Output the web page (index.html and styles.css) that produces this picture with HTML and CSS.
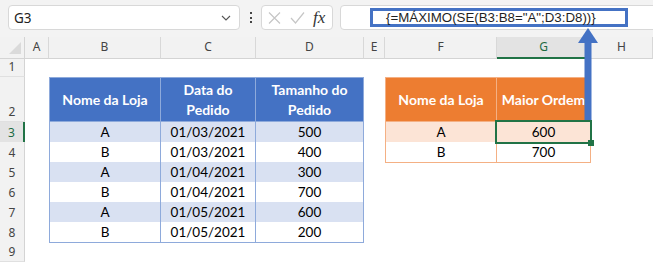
FILE: index.html
```html
<!DOCTYPE html>
<html lang="pt">
<head>
  <meta charset="UTF-8" />
  <title>MÁXIMO SE</title>
  <link rel="stylesheet" href="styles.css">
</head>
<body>
  <div class="toolbar">
    <div class="namebox">
      <span>G3</span>
      <svg width="10" height="6" viewBox="0 0 10 6"><path d="M1 1 L5 5 L9 1" fill="none" stroke="#555" stroke-width="1.1"/></svg>
    </div>
    <div class="dots"><i></i><i></i><i></i></div>
    <div class="fxbox">
      <svg width="13" height="12" viewBox="0 0 13 12"><path d="M1 0.5 L12 11.5 M12 0.5 L1 11.5" stroke="#c6c6c6" stroke-width="1.2"/></svg>
      <svg width="15" height="12" viewBox="0 0 15 12"><path d="M1 6 L5.5 11 L14 0.5" fill="none" stroke="#c6c6c6" stroke-width="1.2"/></svg>
      <span class="fx">fx</span>
    </div>
    <div class="formula">
      <span class="hl">{=MÁXIMO(SE(B3:B8="A";D3:D8))}</span>
    </div>
  </div>

  <div class="sheet">
    <div class="row">
      <div class="corner"></div>
      <div class="ch">A</div><div class="ch">B</div><div class="ch">C</div><div class="ch">D</div>
      <div class="ch">E</div><div class="ch">F</div><div class="ch active">G</div><div class="ch">H</div>
    </div>
    <div class="row">
      <div class="rh">1</div>
      <div></div><div></div><div></div><div></div><div></div><div></div><div></div><div></div>
    </div>
    <div class="row tall">
      <div class="rh">2</div>
      <div></div>
      <div class="b bh first top">Nome da Loja</div>
      <div class="b bh top">Data do<br>Pedido</div>
      <div class="b bh top">Tamanho do<br>Pedido</div>
      <div></div>
      <div class="o oh first top">Nome da Loja</div>
      <div class="o oh top">Maior Ordem</div>
      <div></div>
    </div>
    <div class="row">
      <div class="rh active">3</div>
      <div></div>
      <div class="b band first">A</div><div class="b band">01/03/2021</div><div class="b band">500</div>
      <div></div>
      <div class="o oband first">A</div><div class="o oband sel">600</div>
      <div></div>
    </div>
    <div class="row">
      <div class="rh">4</div>
      <div></div>
      <div class="b first">B</div><div class="b">01/03/2021</div><div class="b">400</div>
      <div></div>
      <div class="o first">B</div><div class="o">700</div>
      <div></div>
    </div>
    <div class="row">
      <div class="rh">5</div>
      <div></div>
      <div class="b band first">A</div><div class="b band">01/04/2021</div><div class="b band">300</div>
      <div></div><div></div><div></div><div></div>
    </div>
    <div class="row">
      <div class="rh">6</div>
      <div></div>
      <div class="b first">B</div><div class="b">01/04/2021</div><div class="b">700</div>
      <div></div><div></div><div></div><div></div>
    </div>
    <div class="row">
      <div class="rh">7</div>
      <div></div>
      <div class="b band first">A</div><div class="b band">01/05/2021</div><div class="b band">600</div>
      <div></div><div></div><div></div><div></div>
    </div>
    <div class="row">
      <div class="rh">8</div>
      <div></div>
      <div class="b first">B</div><div class="b">01/05/2021</div><div class="b">200</div>
      <div></div><div></div><div></div><div></div>
    </div>
    <div class="row">
      <div class="rh">9</div>
      <div></div><div></div><div></div><div></div><div></div><div></div><div></div><div></div>
    </div>
  </div>

  <svg class="arrow" width="22" height="102" viewBox="0 0 22 102">
    <path d="M11 0 L21 15 L1 15 Z" fill="#4472c4"/>
    <rect x="7.5" y="12" width="7" height="88" rx="3" fill="#4472c4"/>
  </svg>
</body>
</html>
```
FILE: styles.css
```css
body {
  margin: 0;
  width: 653px;
  height: 263px;
  overflow: hidden;
  background: #fff;
  font-family: "Noto Sans", sans-serif;
  position: relative;
}
.toolbar {
  height: 37px;
  background: #f3f3f3;
  display: flex;
  align-items: flex-start;
  padding: 5px 0 0 8px;
  box-sizing: border-box;
  overflow: hidden;
}
.namebox {
  width: 232px;
  height: 25px;
  box-sizing: border-box;
  background: #fff;
  border: 1px solid #d8d8d8;
  border-radius: 4px;
  display: flex;
  align-items: center;
  justify-content: space-between;
  padding: 0 8px 0 5px;
  font-size: 13.5px;
  color: #222;
}
.dots {
  width: 21px;
  height: 25px;
  display: flex;
  flex-direction: column;
  align-items: center;
  justify-content: center;
  gap: 2.5px;
}
.dots i {
  width: 2px;
  height: 2px;
  background: #444;
}
.fxbox {
  width: 72px;
  height: 25px;
  box-sizing: border-box;
  background: #fff;
  border: 1px solid #d8d8d8;
  border-radius: 4px;
  display: flex;
  align-items: center;
  padding-left: 6px;
  gap: 9px;
}
.fx {
  font-family: "Liberation Serif", serif;
  font-style: italic;
  font-size: 17px;
  color: #333;
  margin-left: -1px;
  line-height: 1;
}
.formula {
  flex: 1;
  margin-left: 7px;
  margin-right: -6px;
  height: 25px;
  box-sizing: border-box;
  background: #fff;
  border: 1px solid #d8d8d8;
  border-radius: 4px;
  padding: 2px 0 0 29px;
}
.hl {
  display: block;
  width: 258px;
  height: 19px;
  box-sizing: border-box;
  border: 3px solid #4472c4;
  padding-left: 13px;
  font-family: "Liberation Sans", sans-serif;
  font-size: 13.3px;
  line-height: 14px;
  color: #1f1f1f;
}
.row {
  display: grid;
  grid-template-columns: 25px 24px 112px 95px 108px 21px 112px 94px 1fr;
  height: 20px;
}
.row.tall {
  height: 45px;
}
.corner {
  background: #f2f2f2;
  border-right: 1px solid #d4d4d4;
  border-bottom: 1px solid #d4d4d4;
  position: relative;
}
.corner::after {
  content: "";
  position: absolute;
  left: 9px;
  top: 5px;
  width: 12px;
  height: 12px;
  background: #dadada;
  clip-path: polygon(100% 0, 100% 100%, 0 100%);
}
.ch {
  background: #f2f2f2;
  border-right: 1px solid #d8d8d8;
  border-bottom: 1px solid #d4d4d4;
  text-align: center;
  font-size: 12px;
  line-height: 20px;
  color: #444;
}
.ch.active {
  background: #e3e3e3;
  color: #1d6b43;
  border-bottom: 2px solid #217346;
}
.rh {
  background: #f2f2f2;
  border-right: 1px solid #d4d4d4;
  border-bottom: 1px solid #e0e0e0;
  display: flex;
  align-items: flex-end;
  justify-content: center;
  font-size: 12px;
  line-height: 19px;
  color: #444;
}
.rh.active {
  background: #e3e3e3;
  border-right: 2px solid #217346;
  color: #1d6b43;
}
.b, .o {
  font-family: Lato, "Liberation Sans", sans-serif;
  font-size: 13.5px;
  color: #000;
  display: flex;
  align-items: center;
  justify-content: center;
  text-align: center;
  line-height: 20px;
  background: #fff;
}
.b {
  border-right: 1px solid #8eaadb;
  border-bottom: 1px solid #8eaadb;
}
.b.first {
  border-left: 1px solid #8eaadb;
}
.b.top, .o.top {
  border-top: 1px solid #8eaadb;
}
.o.top {
  border-top-color: #f4b084;
}
.bh {
  background: #4472c4;
  color: #fff;
  font-weight: bold;
  font-size: 14px;
}
.band {
  background: #d9e1f2;
}
.o {
  border-right: 1px solid #f4b084;
  border-bottom: 1px solid #f4b084;
}
.o.first {
  border-left: 1px solid #f4b084;
}
.oh {
  background: #ed7d31;
  color: #fff;
  font-weight: bold;
  font-size: 14px;
  white-space: nowrap;
}
.oband {
  background: #fce4d6;
}
.sel {
  position: relative;
  z-index: 2;
}
.sel::after {
  content: "";
  position: absolute;
  top: -2px;
  left: -2px;
  right: -2px;
  bottom: -2px;
  border: 2px solid #217346;
}
.sel::before {
  content: "";
  position: absolute;
  right: -4px;
  bottom: -4px;
  width: 6px;
  height: 6px;
  background: #217346;
  z-index: 1;
}
.arrow {
  position: absolute;
  left: 577px;
  top: 28px;
}
```
